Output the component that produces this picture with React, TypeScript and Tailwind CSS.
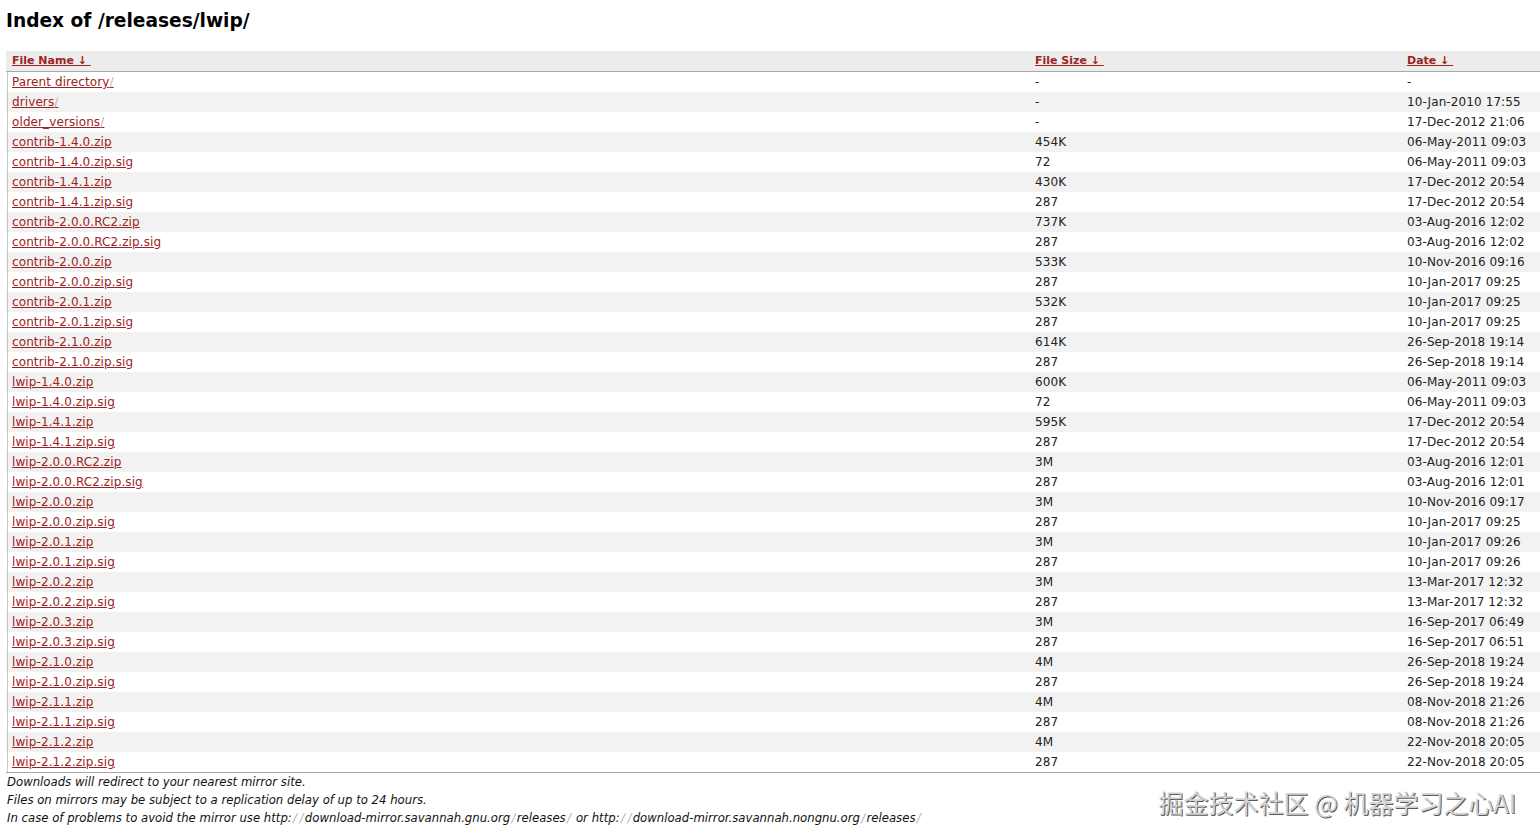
import React from "react";

const rows: [string, string, string][] = [
  ["Parent directory/", "-", "-"],
  ["drivers/", "-", "10-Jan-2010 17:55"],
  ["older_versions/", "-", "17-Dec-2012 21:06"],
  ["contrib-1.4.0.zip", "454K", "06-May-2011 09:03"],
  ["contrib-1.4.0.zip.sig", "72", "06-May-2011 09:03"],
  ["contrib-1.4.1.zip", "430K", "17-Dec-2012 20:54"],
  ["contrib-1.4.1.zip.sig", "287", "17-Dec-2012 20:54"],
  ["contrib-2.0.0.RC2.zip", "737K", "03-Aug-2016 12:02"],
  ["contrib-2.0.0.RC2.zip.sig", "287", "03-Aug-2016 12:02"],
  ["contrib-2.0.0.zip", "533K", "10-Nov-2016 09:16"],
  ["contrib-2.0.0.zip.sig", "287", "10-Jan-2017 09:25"],
  ["contrib-2.0.1.zip", "532K", "10-Jan-2017 09:25"],
  ["contrib-2.0.1.zip.sig", "287", "10-Jan-2017 09:25"],
  ["contrib-2.1.0.zip", "614K", "26-Sep-2018 19:14"],
  ["contrib-2.1.0.zip.sig", "287", "26-Sep-2018 19:14"],
  ["lwip-1.4.0.zip", "600K", "06-May-2011 09:03"],
  ["lwip-1.4.0.zip.sig", "72", "06-May-2011 09:03"],
  ["lwip-1.4.1.zip", "595K", "17-Dec-2012 20:54"],
  ["lwip-1.4.1.zip.sig", "287", "17-Dec-2012 20:54"],
  ["lwip-2.0.0.RC2.zip", "3M", "03-Aug-2016 12:01"],
  ["lwip-2.0.0.RC2.zip.sig", "287", "03-Aug-2016 12:01"],
  ["lwip-2.0.0.zip", "3M", "10-Nov-2016 09:17"],
  ["lwip-2.0.0.zip.sig", "287", "10-Jan-2017 09:25"],
  ["lwip-2.0.1.zip", "3M", "10-Jan-2017 09:26"],
  ["lwip-2.0.1.zip.sig", "287", "10-Jan-2017 09:26"],
  ["lwip-2.0.2.zip", "3M", "13-Mar-2017 12:32"],
  ["lwip-2.0.2.zip.sig", "287", "13-Mar-2017 12:32"],
  ["lwip-2.0.3.zip", "3M", "16-Sep-2017 06:49"],
  ["lwip-2.0.3.zip.sig", "287", "16-Sep-2017 06:51"],
  ["lwip-2.1.0.zip", "4M", "26-Sep-2018 19:24"],
  ["lwip-2.1.0.zip.sig", "287", "26-Sep-2018 19:24"],
  ["lwip-2.1.1.zip", "4M", "08-Nov-2018 21:26"],
  ["lwip-2.1.1.zip.sig", "287", "08-Nov-2018 21:26"],
  ["lwip-2.1.2.zip", "4M", "22-Nov-2018 20:05"],
  ["lwip-2.1.2.zip.sig", "287", "22-Nov-2018 20:05"],
];

const Slash = () => <span className="text-[#b4b4b4]">/</span>;
const FSlash = () => <span className="text-[#b4b4b4] mx-[1.3px]">/</span>;

function withSlashes(s: string) {
  const parts = s.split("/");
  return parts.map((p, i) => (
    <React.Fragment key={i}>
      {p}
      {i < parts.length - 1 && <Slash />}
    </React.Fragment>
  ));
}

export default function App() {
  return (
    <div
      className="relative min-h-[840px] bg-white text-[#222] pl-[6px]"
      style={{ fontFamily: '"DejaVu Sans", Verdana, sans-serif' }}
    >
      <h1 className="pt-[9px] h-[51px] text-[18.6px] font-bold text-black leading-[24px]">
        Index of /releases/lwip/
      </h1>
      <div className="w-[1534px]">
        <div className="grid grid-cols-[1024px_372px_1fr] h-[21px] items-center bg-[#ececec] border-b border-[#a9a9a9] font-bold text-[11px]">
          <div className="pl-[6px]">
            <span className="text-[#9b2424] underline">File Name ↓&nbsp;</span>
          </div>
          <div className="pl-[5px]">
            <span className="text-[#9b2424] underline">File Size ↓&nbsp;</span>
          </div>
          <div className="pl-[5px]">
            <span className="text-[#9b2424] underline">Date ↓&nbsp;</span>
          </div>
        </div>
        <div className="border-b border-[#a9a9a9] text-[12px] tracking-[0.1px]">
          {rows.map((r, i) => (
            <div
              key={i}
              className={`grid grid-cols-[1024px_372px_1fr] h-[20px] items-center ${
                i % 2 === 1 ? "bg-[#f2f2f2]" : "bg-white"
              }`}
            >
              <div className="pl-[4px] ml-[1px] border-l border-[#c8c8c8] h-full flex items-center">
                <span className="text-[#9b2424] underline">{withSlashes(r[0])}</span>
              </div>
              <div className="pl-[5px]">{r[1]}</div>
              <div className="pl-[5px]">{r[2]}</div>
            </div>
          ))}
        </div>
      </div>
      <div className="italic leading-[18px] pl-[1px] text-[#111] text-[11.7px]">
        <div>Downloads will redirect to your nearest mirror site.</div>
        <div>Files on mirrors may be subject to a replication delay of up to 24 hours.</div>
        <div>
          In case of problems to avoid the mirror use http:<FSlash />
          <FSlash />download-mirror.savannah.gnu.org<FSlash />releases<FSlash /> or http:<FSlash />
          <FSlash />download-mirror.savannah.nongnu.org<FSlash />releases<FSlash />
        </div>
      </div>
      <div
        className="absolute right-[24px] top-[785px] text-[25px] leading-[34px] text-[#d2d2d2]"
        style={{
          fontFamily: '"Noto Sans CJK SC", "Noto Sans", sans-serif',
          textShadow: "1px 1px 0 #5a5a5a, -1px -1px 0 #ffffff",
        }}
      >
        掘金技术社区 @ 机器学习之心AI
      </div>
    </div>
  );
}
